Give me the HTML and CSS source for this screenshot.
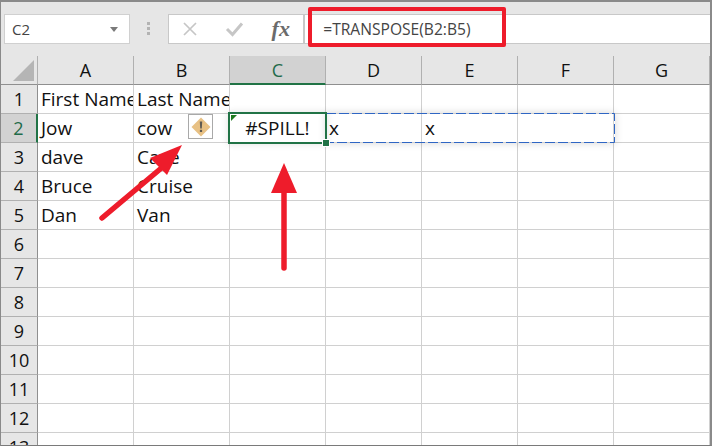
FILE: index.html
```html
<!DOCTYPE html>
<html lang="en">
<head>
<meta charset="utf-8">
<title>Spill error</title>
<link rel="stylesheet" href="styles.css">
</head>
<body>
<div class="app">
  <div class="formula-bar">
    <div class="name-box"><span>C2</span><svg class="caret" width="8" height="5" viewBox="0 0 8 5"><path d="M0 0H8L4 5Z" fill="#7a7a7a"/></svg></div>
    <div class="grip"><i></i><i></i><i></i></div>
    <div class="fx-box">
      <svg class="fx-icon" width="16" height="16" viewBox="0 0 16 16"><path d="M2 2L14 14M14 2L2 14" stroke="#c6c6c6" stroke-width="1.7" fill="none"/></svg>
      <svg class="fx-icon" width="20" height="16" viewBox="0 0 20 16"><path d="M2 8L7.5 13.5L17 2.5" stroke="#c6c6c6" stroke-width="3" fill="none"/></svg>
      <span class="fx-label">fx</span>
    </div>
    <div class="formula-input">=TRANSPOSE(B2:B5)</div>
  </div>
  <div class="sheet">
    <div class="corner"><svg width="21" height="21" viewBox="0 0 21 21"><path d="M21 0V21H0Z" fill="#b5b5b5"/></svg></div>
    <div class="ch">A</div><div class="ch">B</div><div class="ch ch-active">C</div><div class="ch">D</div><div class="ch">E</div><div class="ch">F</div><div class="ch ch-last">G</div>

    <div class="rh">1</div><div class="c">First Name</div><div class="c">Last Name</div><div class="c"></div><div class="c"></div><div class="c"></div><div class="c"></div><div class="c"></div>
    <div class="rh rh-active">2</div><div class="c">Jow</div><div class="c">cow</div><div class="c c-center">#SPILL!</div><div class="c">x</div><div class="c">x</div><div class="c"></div><div class="c"></div>
    <div class="rh">3</div><div class="c">dave</div><div class="c">Cave</div><div class="c"></div><div class="c"></div><div class="c"></div><div class="c"></div><div class="c"></div>
    <div class="rh">4</div><div class="c">Bruce</div><div class="c">Cruise</div><div class="c"></div><div class="c"></div><div class="c"></div><div class="c"></div><div class="c"></div>
    <div class="rh">5</div><div class="c">Dan</div><div class="c">Van</div><div class="c"></div><div class="c"></div><div class="c"></div><div class="c"></div><div class="c"></div>
    <div class="rh">6</div><div class="c"></div><div class="c"></div><div class="c"></div><div class="c"></div><div class="c"></div><div class="c"></div><div class="c"></div>
    <div class="rh">7</div><div class="c"></div><div class="c"></div><div class="c"></div><div class="c"></div><div class="c"></div><div class="c"></div><div class="c"></div>
    <div class="rh">8</div><div class="c"></div><div class="c"></div><div class="c"></div><div class="c"></div><div class="c"></div><div class="c"></div><div class="c"></div>
    <div class="rh">9</div><div class="c"></div><div class="c"></div><div class="c"></div><div class="c"></div><div class="c"></div><div class="c"></div><div class="c"></div>
    <div class="rh">10</div><div class="c"></div><div class="c"></div><div class="c"></div><div class="c"></div><div class="c"></div><div class="c"></div><div class="c"></div>
    <div class="rh">11</div><div class="c"></div><div class="c"></div><div class="c"></div><div class="c"></div><div class="c"></div><div class="c"></div><div class="c"></div>
    <div class="rh">12</div><div class="c"></div><div class="c"></div><div class="c"></div><div class="c"></div><div class="c"></div><div class="c"></div><div class="c"></div>
    <div class="rh">13</div><div class="c"></div><div class="c"></div><div class="c"></div><div class="c"></div><div class="c"></div><div class="c"></div><div class="c"></div>
  </div>

  <div class="spill-range">
    <svg width="289" height="30" viewBox="0 0 289 30"><path d="M0 .5H288.500V29.500H0" stroke="#2f66c4" stroke-width="1" stroke-dasharray="10 3" fill="none"/></svg>
  </div>
  <div class="active-cell"><i class="tri"></i><i class="handle"></i></div>
  <div class="warn">
    <svg width="22" height="22" viewBox="0 0 22 22"><path d="M11 1.500L20.500 11L11 20.500L1.500 11Z" fill="#e8c184"/><path d="M9.800 5.500H12.200L11.800 12.500H10.200Z" fill="#5e5a52"/><rect x="9.900" y="13.800" width="2.200" height="2.200" fill="#5e5a52"/></svg>
  </div>
  <div class="red-box"></div>
  <svg class="arrows" width="712" height="446" viewBox="0 0 712 446">
    <path d="M102 218L165 165" stroke="#ee1c2b" stroke-width="5.500" stroke-linecap="round" fill="none"/>
    <path d="M182 145L150 158L167 175Z" fill="#ee1c2b"/>
    <path d="M284 268V190" stroke="#ee1c2b" stroke-width="5.500" stroke-linecap="round" fill="none"/>
    <path d="M284 163L271 193H297Z" fill="#ee1c2b"/>
  </svg>
</div>
</body>
</html>
```
FILE: styles.css
```css
* { box-sizing: border-box; }
html, body { margin: 0; padding: 0; }
body { width: 712px; height: 446px; overflow: hidden; background: #fff; }

.app {
  position: relative;
  width: 712px;
  height: 446px;
  overflow: hidden;
  background: #e6e6e6;
  border-top: 2px solid #8a8a8a;
  border-left: 1px solid #8a8a8a;
  border-right: 2px solid #8a8a8a;
  border-bottom: 1px solid #7a7a7a;
  font-family: "Open Sans", "Noto Sans", sans-serif;
  color: #111;
}

.formula-bar {
  display: flex;
  align-items: flex-start;
  height: 54px;
  padding-top: 12px;
}
.name-box {
  display: flex;
  align-items: center;
  justify-content: space-between;
  width: 126px;
  height: 30px;
  margin-left: 3px;
  padding: 0 11px 0 7px;
  background: #fff;
  border: 1px solid #d0d0d0;
  font-size: 15px;
  color: #444;
}
.grip {
  display: flex;
  flex-direction: column;
  gap: 2px;
  width: 38px;
  padding: 8px 0 0 17px;
}
.grip i { display: block; width: 3px; height: 3px; background: #b3b3b3; }
.fx-box {
  display: flex;
  align-items: center;
  width: 137px;
  height: 30px;
  padding-left: 13px;
  background: #fff;
  border: 1px solid #c8c8c8;
}
.fx-icon { flex: none; }
.fx-icon + .fx-icon { margin-left: 27px; }
.fx-label {
  margin-left: 27px;
  font-family: "Liberation Serif", serif;
  font-style: italic;
  font-weight: bold;
  font-size: 22px;
  line-height: 1;
  color: #6b6b6b;
}
.formula-input {
  width: 407px;
  height: 30px;
  padding: 3px 0 0 18px;
  background: #fff;
  border: 1px solid #c8c8c8;
  border-right: 0;
  font-size: 15.600px;
  color: #444;
}

.sheet {
  display: grid;
  grid-template-columns: 37px repeat(6, 96px) 96px;
  grid-template-rows: 29px repeat(13, 29px);
  font-size: 19px;
}
.corner {
  display: flex;
  align-items: flex-end;
  justify-content: flex-end;
  padding: 0 3px 3px 0;
  border-right: 1px solid #b0b0b0;
  border-bottom: 1px solid #8f8f8f;
}
.ch {
  display: flex;
  align-items: center;
  justify-content: center;
  background: #e6e6e6;
  border-right: 1px solid #b0b0b0;
  border-bottom: 1px solid #8f8f8f;
  font-size: 18px;
}
.ch-active {
  background: #d2d2d2;
  border-bottom: 2px solid #217346;
  color: #1f6b4a;
}
.rh {
  display: flex;
  align-items: center;
  justify-content: center;
  background: #e6e6e6;
  border-right: 1px solid #8f8f8f;
  border-bottom: 1px solid #b0b0b0;
  font-size: 18px;
}
.rh-active {
  background: #d2d2d2;
  border-right: 2px solid #217346;
  color: #1f6b4a;
}
.c {
  display: flex;
  align-items: center;
  padding: 0 0 0 3px;
  background: #fff;
  border-right: 1px solid #d0d0d0;
  border-bottom: 1px solid #d0d0d0;
  white-space: nowrap;
  overflow: hidden;
}
.c-center { justify-content: center; padding-left: 0; }

.spill-range {
  position: absolute;
  left: 325px;
  top: 111px;
  width: 289px;
  height: 30px;
  box-shadow: 0 0 8px rgba(0, 0, 0, 0.16);
}
.spill-range svg { display: block; }
.active-cell {
  position: absolute;
  left: 227px;
  top: 110px;
  width: 99px;
  height: 32px;
  border: 2px solid #217346;
  box-shadow: 0 0 7px rgba(0, 0, 0, 0.12);
}
.tri {
  position: absolute;
  left: 1px;
  top: 1px;
  width: 0;
  height: 0;
  border-top: 6px solid #1e7a1e;
  border-right: 6px solid transparent;
}
.handle {
  position: absolute;
  right: -4px;
  bottom: -4px;
  width: 6px;
  height: 6px;
  background: #217346;
  box-shadow: 0 0 0 1px #fff;
}
.warn {
  position: absolute;
  left: 187px;
  top: 112px;
  display: flex;
  align-items: center;
  justify-content: center;
  width: 25px;
  height: 25px;
  background: #fff;
  border: 1px solid #a9a9a9;
}
.red-box {
  position: absolute;
  left: 307px;
  top: 5px;
  width: 198px;
  height: 40px;
  border: 4px solid #ee1c2b;
  border-radius: 2px;
}
.arrows {
  position: absolute;
  left: -1px;
  top: -2px;
}
```
